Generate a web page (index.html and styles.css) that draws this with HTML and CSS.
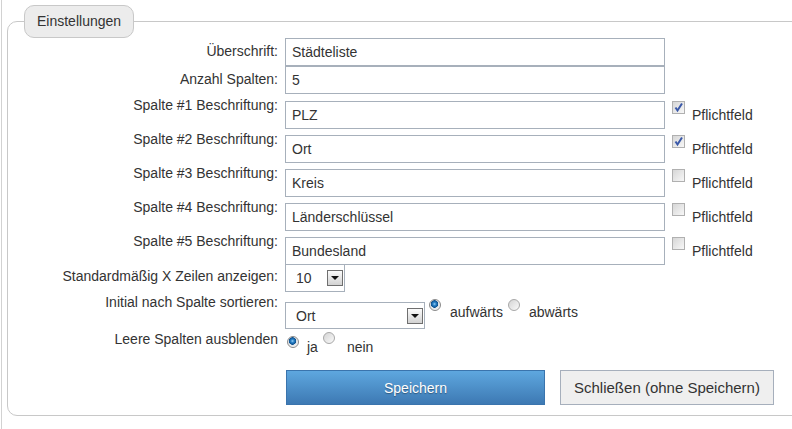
FILE: index.html
```html
<!DOCTYPE html>
<html lang="de">
<head>
	<meta charset="UTF-8">
	<title>Einstellungen</title>
	<link rel="stylesheet" href="styles.css">
</head>
<body>
<div class="page">
	<fieldset class="settings">
		<legend>Einstellungen</legend>

		<div class="row row-tight">
			<label class="label">Überschrift:</label>
			<input class="text" type="text" value="Städteliste">
		</div>
		<div class="row row-tight">
			<label class="label">Anzahl Spalten:</label>
			<input class="text" type="text" value="5">
		</div>

		<div class="row row-col">
			<label class="label">Spalte #1 Beschriftung:</label>
			<input class="text" type="text" value="PLZ">
			<span class="check is-checked"><svg width="11" height="11" viewBox="0 0 11 11"><path d="M2.5 5.5 L4.5 8.5 L9 1.5" fill="none" stroke="#3a58a8" stroke-width="2"/></svg></span>
			<span class="check-text">Pflichtfeld</span>
		</div>
		<div class="row row-col">
			<label class="label">Spalte #2 Beschriftung:</label>
			<input class="text" type="text" value="Ort">
			<span class="check is-checked"><svg width="11" height="11" viewBox="0 0 11 11"><path d="M2.5 5.5 L4.5 8.5 L9 1.5" fill="none" stroke="#3a58a8" stroke-width="2"/></svg></span>
			<span class="check-text">Pflichtfeld</span>
		</div>
		<div class="row row-col">
			<label class="label">Spalte #3 Beschriftung:</label>
			<input class="text" type="text" value="Kreis">
			<span class="check"></span>
			<span class="check-text">Pflichtfeld</span>
		</div>
		<div class="row row-col">
			<label class="label">Spalte #4 Beschriftung:</label>
			<input class="text" type="text" value="Länderschlüssel">
			<span class="check"></span>
			<span class="check-text">Pflichtfeld</span>
		</div>
		<div class="row row-col">
			<label class="label">Spalte #5 Beschriftung:</label>
			<input class="text" type="text" value="Bundesland">
			<span class="check"></span>
			<span class="check-text">Pflichtfeld</span>
		</div>

		<div class="row row-lines">
			<label class="label">Standardmäßig X Zeilen anzeigen:</label>
			<div class="select select-small">
				<span>10</span>
				<span class="arrow"><span class="caret"></span></span>
			</div>
		</div>

		<div class="row row-sort">
			<label class="label">Initial nach Spalte sortieren:</label>
			<div class="select select-wide">
				<span>Ort</span>
				<span class="arrow"><span class="caret"></span></span>
			</div>
			<span class="radio is-on"></span>
			<span class="radio-text">aufwärts</span>
			<span class="radio"></span>
			<span class="radio-text">abwärts</span>
		</div>

		<div class="row row-empty">
			<label class="label">Leere Spalten ausblenden</label>
			<span class="radio is-on"></span>
			<span class="radio-text">ja</span>
			<span class="radio radio-up"></span>
			<span class="radio-text radio-text-wide">nein</span>
		</div>

		<div class="buttons">
			<button type="button" class="btn btn-primary">Speichern</button>
			<button type="button" class="btn btn-secondary">Schließen (ohne Speichern)</button>
		</div>
	</fieldset>
</div>
</body>
</html>
```

FILE: styles.css
```css
body {
	margin: 0;
	overflow: hidden;
	font-family: "Liberation Sans", Arial, sans-serif;
	font-size: 14px;
	color: #333;
	background-color: #fff;
}

.page {
	margin-left: 1px;
	border-left: 1px solid #d2d2d2;
	height: 429px;
	overflow: hidden;
}

.settings {
	margin: 5px -30px 0 5px;
	padding: 0 0 10px 0;
	border: 1px solid #c8c8c8;
	border-radius: 10px;
	min-width: 0;
}

.settings legend {
	margin-left: 16px;
	padding: 7px 12px;
	border: 1px solid #c8c8c8;
	border-radius: 10px;
	background-color: #ececec;
	line-height: 17px;
	color: #333;
}

.row {
	display: flex;
	align-items: flex-start;
}

.label {
	flex: none;
	width: 270px;
	margin-right: 7px;
	text-align: right;
	line-height: 16px;
}

.text {
	box-sizing: border-box;
	width: 380px;
	height: 28px;
	padding: 0 6px;
	border: 1px solid #a7b0bb;
	font-family: inherit;
	font-size: 14px;
	color: #333;
	outline: none;
}

.row-tight {
	height: 28px;
}

.row-tight .label {
	padding-top: 5px;
}

.row-col {
	height: 34px;
}

.row-col .label {
	padding-top: 3px;
}

.row-col .text {
	margin-top: 7px;
}

.check {
	flex: none;
	box-sizing: border-box;
	width: 13px;
	height: 13px;
	margin: 7px 0 0 7px;
	border: 1px solid #b0b0b0;
	background: linear-gradient(135deg, #d6d6d6, #f7f7f7);
	display: flex;
	align-items: center;
	justify-content: center;
}

.check svg {
	display: block;
}

.check-text {
	margin-left: 7px;
	padding-top: 13px;
	line-height: 16px;
}

.select {
	box-sizing: border-box;
	height: 28px;
	padding: 0 1px 0 10px;
	border: 1px solid #a7b0bb;
	display: flex;
	align-items: center;
	justify-content: space-between;
}

.select-small {
	width: 60px;
}

.select-wide {
	width: 140px;
	height: 27px;
	margin-top: 10px;
}

.arrow {
	box-sizing: border-box;
	width: 16px;
	height: 16px;
	border: 1px solid #6f6f6f;
	background: linear-gradient(#fbfbfb, #d2d2d2);
	display: flex;
	align-items: center;
	justify-content: center;
}

.caret {
	width: 0;
	height: 0;
	border-left: 4px solid transparent;
	border-right: 4px solid transparent;
	border-top: 4px solid #111;
}

.row-lines {
	height: 28px;
}

.row-lines .label {
	padding-top: 4px;
}

.row-sort {
	height: 36px;
}

.row-sort .label {
	padding-top: 2px;
}

.radio {
	flex: none;
	box-sizing: border-box;
	width: 12px;
	height: 12px;
	border: 1px solid #a8a8a8;
	border-radius: 50%;
	background: linear-gradient(135deg, #d4d4d4, #fafafa);
}

.radio.is-on {
	border-color: #8a8a8a;
	background: radial-gradient(circle at 45% 40%, #9fd3f5 0, #2d86cc 1.5px, #0b4f8e 3.5px, #dfe4e8 4px, #f4f4f4 6px);
}

.radio-text {
	line-height: 16px;
}

.row-sort .radio {
	margin: 7px 0 0 4px;
}

.row-sort .radio-text {
	margin-left: 9px;
	padding-top: 12px;
}

.row-sort .radio + .radio-text + .radio {
	margin-left: 5px;
}

.row-empty {
	height: 28px;
}

.row-empty .label {
	padding-top: 3px;
}

.row-empty .radio {
	margin: 8px 0 0 2px;
}

.row-empty .radio-up {
	margin: 4px 0 0 5px;
}

.row-empty .radio-text {
	margin-left: 8px;
	padding-top: 11px;
}

.row-empty .radio-text-wide {
	margin-left: 12px;
}

.buttons {
	display: flex;
	gap: 15px;
	margin-top: 14px;
	padding-left: 278px;
}

.btn {
	box-sizing: border-box;
	height: 35px;
	border: 1px solid;
	font-family: inherit;
	font-size: 14px;
	cursor: pointer;
}

.btn-primary {
	width: 259px;
	border-color: #3a74ad;
	background: linear-gradient(#5ea7df, #3d79b3);
	color: #fff;
	text-shadow: 0 1px 1px rgba(0, 0, 0, 0.35);
}

.btn-secondary {
	width: 214px;
	border-color: #a6afbc;
	background-color: #efefef;
	color: #333;
	font-size: 15px;
}
```
